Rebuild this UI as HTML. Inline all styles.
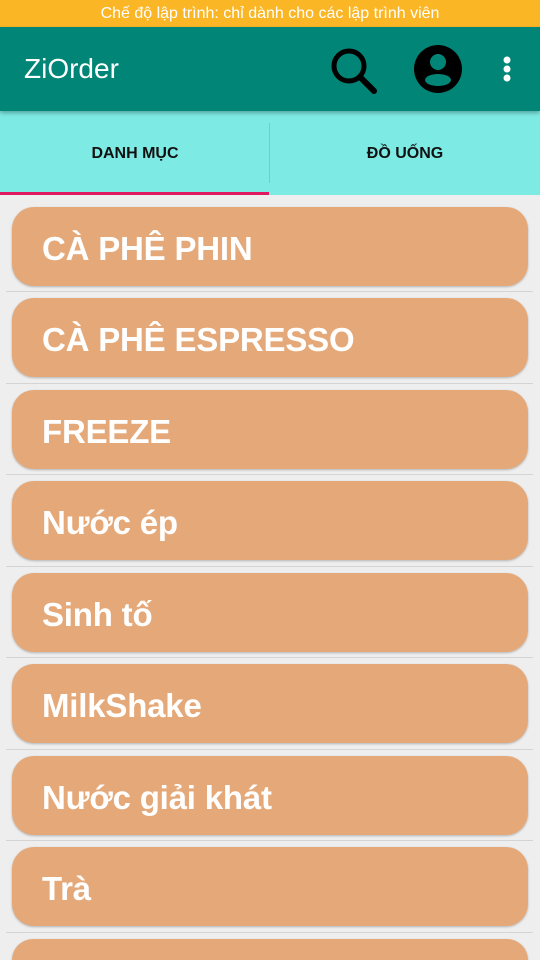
<!DOCTYPE html>
<html><head><meta charset="utf-8"><style>
*{margin:0;padding:0;box-sizing:border-box}
html,body{width:540px;height:960px;overflow:hidden}
body{background:#eeeeee;font-family:"Liberation Sans","Noto Sans CJK SC",sans-serif;position:relative}
.sb{position:absolute;top:0;left:0;width:540px;height:27px;background:#fbb626;color:#fff;font-size:16px;text-align:center;line-height:27px}
.tb{position:absolute;top:27px;left:0;width:540px;height:84px;background:#018577;box-shadow:0 2px 4px rgba(0,0,0,.3);z-index:2}
.tb .t{position:absolute;left:24px;top:26px;color:#fff;font-size:28px}
.tabs{position:absolute;top:111px;left:0;width:540px;height:84px;background:#7eeae4}
.tab{position:absolute;top:0;width:270px;height:84px;text-align:center;line-height:86px;font-weight:bold;font-size:16px;color:#111}
.div{position:absolute;left:269px;top:12px;width:1px;height:60px;background:#6ccfc9}
.ind{position:absolute;left:0;top:192px;width:269px;height:3px;background:#e0185f}
.card{position:absolute;left:12px;width:516px;height:79px;background:#e5a979;border-radius:22px;box-shadow:0 1px 2px rgba(0,0,0,.25);color:#fff;font-weight:bold;font-size:33px;letter-spacing:-0.2px;padding-left:30px;line-height:84px;overflow:hidden}
.sep{position:absolute;left:6px;width:527px;height:1px;background:#d4d4d4}
</style></head><body>
<div class="sb">Chế độ lập trình: chỉ dành cho các lập trình viên</div>
<div class="tb"><div class="t">ZiOrder</div>
<svg style="position:absolute;left:328px;top:17px" width="52" height="52" viewBox="0 0 52 52"><circle cx="21" cy="22" r="15" fill="none" stroke="#000" stroke-width="5"/><line x1="32" y1="33" x2="46" y2="47" stroke="#000" stroke-width="6" stroke-linecap="round"/></svg>
<svg style="position:absolute;left:413px;top:17px" width="50" height="50" viewBox="0 0 50 50"><circle cx="25" cy="25" r="24" fill="#000"/><circle cx="25" cy="18" r="8" fill="#018577"/><ellipse cx="25" cy="36" rx="13" ry="6" fill="#018577"/></svg>
<svg style="position:absolute;left:500px;top:28px" width="14" height="30" viewBox="0 0 14 30"><circle cx="7" cy="5" r="3.5" fill="#fff"/><circle cx="7" cy="14" r="3.5" fill="#fff"/><circle cx="7" cy="23" r="3.5" fill="#fff"/></svg>
</div>
<div class="tabs"><div class="tab" style="left:0">DANH MỤC</div><div class="tab" style="left:270px">ĐỒ UỐNG</div><div class="div"></div></div>
<div class="ind"></div>
<div class="card" style="top:207px">CÀ PHÊ PHIN</div><div class="sep" style="top:291px"></div>
<div class="card" style="top:298px">CÀ PHÊ ESPRESSO</div><div class="sep" style="top:383px"></div>
<div class="card" style="top:390px">FREEZE</div><div class="sep" style="top:474px"></div>
<div class="card" style="top:481px">Nước ép</div><div class="sep" style="top:566px"></div>
<div class="card" style="top:573px">Sinh tố</div><div class="sep" style="top:657px"></div>
<div class="card" style="top:664px">MilkShake</div><div class="sep" style="top:749px"></div>
<div class="card" style="top:756px">Nước giải khát</div><div class="sep" style="top:840px"></div>
<div class="card" style="top:847px">Trà</div><div class="sep" style="top:932px"></div>
<div class="card" style="top:939px;height:21px;border-radius:22px 22px 0 0"></div>
</body></html>
